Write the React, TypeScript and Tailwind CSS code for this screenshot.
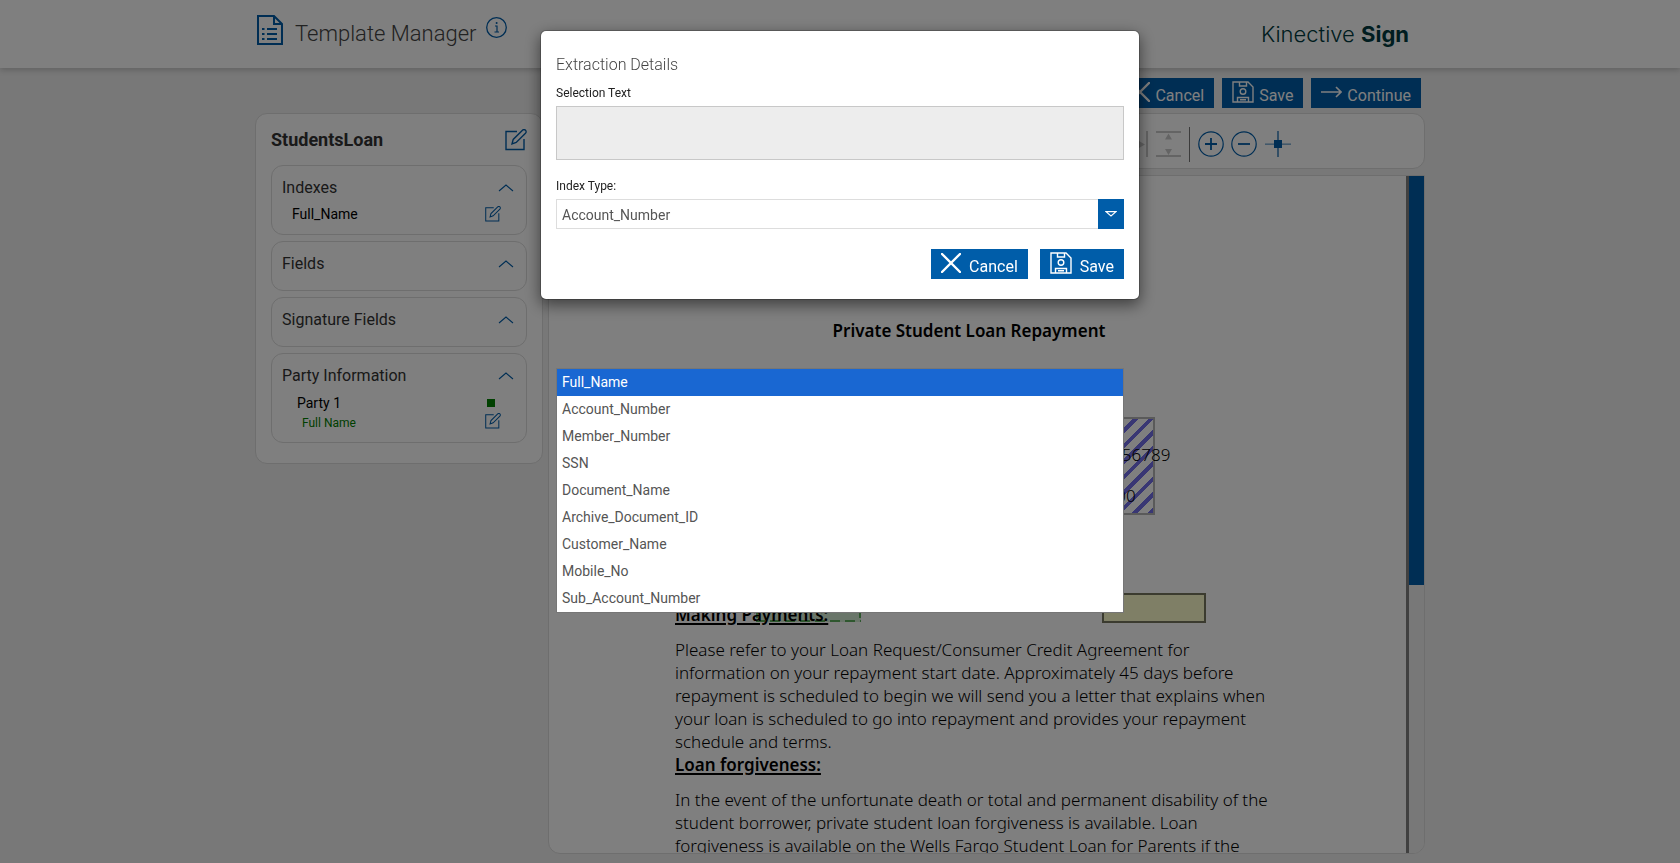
import { useState } from "react";
import type { ReactNode } from "react";

const INDEX_TYPES = [
  "Full_Name",
  "Account_Number",
  "Member_Number",
  "SSN",
  "Document_Name",
  "Archive_Document_ID",
  "Customer_Name",
  "Mobile_No",
  "Sub_Account_Number",
];

function CloseIcon() {
  return (
    <svg className="size-5" viewBox="0 0 20 20" fill="none" stroke="currentColor" strokeWidth="2.4" strokeLinecap="round">
      <path d="M1 1l18 18M19 1L1 19" />
    </svg>
  );
}

function SaveIcon() {
  return (
    <svg className="size-[22px]" viewBox="0 0 22 22" fill="none" stroke="currentColor" strokeWidth="1.4">
      <path d="M1 1h15l5 5v15H1z" />
      <path d="M7.5 1v4h7V1" />
      <circle cx="11" cy="10.5" r="2.8" />
      <path d="M5.5 21v-4.5h11V21M8 18.8h6" />
    </svg>
  );
}

function ArrowIcon() {
  return (
    <svg className="h-5 w-[21px]" viewBox="0 0 21 20" fill="none" stroke="currentColor" strokeWidth="1.6">
      <path d="M0 10h20M15 5l5 5-5 5" />
    </svg>
  );
}

function EditIcon({ className }: { className: string }) {
  return (
    <svg className={className} viewBox="0 0 22 22" fill="none" stroke="#005da9" strokeWidth="1.4">
      <path d="M12 2.5H1v18h18V10" />
      <path d="M7 15l1.2-4.6 9.3-9.2a1.9 1.9 0 0 1 3 3l-9.3 9.3z" />
    </svg>
  );
}

function ChevronUp() {
  return (
    <svg className="h-2 w-4" viewBox="0 0 16 8" fill="none" stroke="#005da9" strokeWidth="1.1">
      <path d="M1 7l7-6 7 6" />
    </svg>
  );
}

function ActionButton({ icon, label, wide = false }: { icon: ReactNode; label: string; wide?: boolean }) {
  return (
    <button
      type="button"
      className={`flex h-[30px] items-center bg-[#005da9] px-[10px] text-base text-white ${wide ? "gap-2" : "gap-[5px]"}`}
    >
      <span className="pb-0.5">{icon}</span>
      <span className="pt-[5px]">{label}</span>
    </button>
  );
}

function SideCard({ title, children }: { title: string; children?: ReactNode }) {
  return (
    <section className="rounded-xl border border-[#dcdcdc] pt-[11px] pr-3 pb-[5px] pl-[10px]">
      <button type="button" className="flex h-[22px] w-full items-center justify-between text-base text-[#333]">
        {title}
        <ChevronUp />
      </button>
      {children || <div className="h-[10px]" />}
    </section>
  );
}

function Header() {
  return (
    <header className="h-[68px] shrink-0 bg-white shadow-[0_2px_6px_rgba(0,0,0,0.2)]">
      <div className="mx-auto flex h-full w-full max-w-[1170px] items-start justify-between pr-4 pl-0.5">
        <div className="flex items-start pt-[15px]">
          <svg className="h-[30px] w-[26px]" viewBox="0 0 26 30" fill="none" stroke="#005da9" strokeWidth="2">
            <path d="M1 1h16l8 8v20H1z" />
            <path d="M17 1v8h8" />
            <path d="M10 14h10M10 19h10M10 24h10M5 14h2.500M5 19h2.500M5 24h2.500" />
          </svg>
          <h1 className="ml-3 pt-[3px] text-[22px] leading-8 font-light text-[#444]">Template Manager</h1>
          <button type="button" aria-label="Information" className="ml-[10px] pt-0.5">
            <svg className="size-[21px]" viewBox="0 0 21 21" fill="none" stroke="#005da9">
              <circle cx="10.5" cy="10.5" r="9.8" strokeWidth="1.3" />
              <path d="M9 9h2v6M8.5 15h4.5" strokeWidth="1.2" />
              <circle cx="10.6" cy="6" r="1" fill="#005da9" stroke="none" />
            </svg>
          </button>
        </div>
        <div className="pt-[18px] font-['Inter',sans-serif] text-[22px] leading-8 text-[#003b40]">
          <span className="font-light">Kinective</span> <span className="font-bold">Sign</span>
        </div>
      </div>
    </header>
  );
}

function Sidebar() {
  return (
    <aside className="w-[288px] shrink-0 self-start rounded-xl border border-[#dcdcdc] bg-white px-[15px] pt-[14px] pb-5">
      <div className="mb-[13px] flex items-center justify-between">
        <h2 className="text-lg leading-6 font-bold text-[#333]">StudentsLoan</h2>
        <button type="button" aria-label="Rename template">
          <EditIcon className="size-[22px]" />
        </button>
      </div>
      <div className="flex flex-col gap-1.5">
        <SideCard title="Indexes">
          <div className="flex h-[30px] items-center justify-between pr-[13px] pl-[10px] text-sm">
            Full_Name
            <button type="button" aria-label="Edit Full_Name">
              <EditIcon className="size-4" />
            </button>
          </div>
        </SideCard>
        <SideCard title="Fields" />
        <SideCard title="Signature Fields" />
        <SideCard title="Party Information">
          <div className="flex h-[26px] items-center justify-between pt-[5px] pr-[19px] pl-[15px] text-sm">
            Party 1
            <span className="size-2 bg-[#008000]" />
          </div>
          <div className="flex h-6 items-start justify-between pr-[13px] pl-5 text-xs leading-4 text-[#008000]">
            <span className="pt-0.5">Full Name</span>
            <button type="button" aria-label="Edit Full Name">
              <EditIcon className="size-4" />
            </button>
          </div>
        </SideCard>
      </div>
    </aside>
  );
}

function Toolbar() {
  return (
    <div className="flex h-14 shrink-0 items-center justify-end rounded-xl border border-[#dcdcdc] bg-white pt-1.5 pr-[133px]">
      <button type="button" aria-label="Fit width">
        <svg className="h-[26px] w-[25px]" viewBox="0 0 25 26" fill="#c9c9c9">
          <path d="M0 0h2v26H0zM23 0h2v26h-2zM3 13.500l6-3.500v7zM22 13.500l-6-3.500v7z" />
        </svg>
      </button>
      <button type="button" aria-label="Fit height" className="ml-2">
        <svg className="h-[26px] w-[25px]" viewBox="0 0 25 26" fill="#c9c9c9">
          <path d="M0 0h25v2H0zM0 24h25v2H0zM12.5 2.5l3.5 6H9zM12.5 24l3.5-6H9z" />
        </svg>
      </button>
      <span className="mx-2 h-[35px] w-px bg-[#777]" />
      <button type="button" aria-label="Zoom in">
        <svg className="size-[26px]" viewBox="0 0 26 26" fill="none" stroke="#005da9">
          <circle cx="13" cy="13" r="12.2" strokeWidth="1.2" />
          <path d="M7 13h12M13 7v12" strokeWidth="1.8" />
        </svg>
      </button>
      <button type="button" aria-label="Zoom out" className="ml-[7px]">
        <svg className="size-[26px]" viewBox="0 0 26 26" fill="none" stroke="#005da9">
          <circle cx="13" cy="13" r="12.2" strokeWidth="1.2" />
          <path d="M7 13h12" strokeWidth="1.8" />
        </svg>
      </button>
      <button type="button" aria-label="Center page" className="ml-2">
        <svg className="size-[26px]" viewBox="0 0 26 26" fill="#005da9">
          <path d="M0 12.5h26v1.3H0z" opacity="0.6" />
          <path d="M12.4 0h1.2v26h-1.2zM9 9h8v8H9z" />
        </svg>
      </button>
    </div>
  );
}

function DocumentView() {
  return (
    <div className="flex min-h-0 flex-1 overflow-hidden rounded-b-xl border border-[#dcdcdc] bg-white">
      <div className="relative min-w-0 flex-1 overflow-hidden">
        {/* Field markers dropped on the page */}
        <div className="absolute top-[241px] left-[473px] h-[98px] w-[133px] border-2 border-[#b4b4b4] bg-[repeating-linear-gradient(-45deg,#726ee8_0px,#726ee8_4px,transparent_4px,transparent_11px)]" />
        <svg className="absolute top-[418px] left-[207px] h-7 w-[105px]" viewBox="0 0 105 28">
          <path d="M0 0h105v28H0z" fill="#d5ecd5" />
          <path d="M0 27h105M0 1h105M1 0v28M104 0v28" fill="none" stroke="#5fae5f" strokeWidth="2" strokeDasharray="10 5" strokeDashoffset="1" />
        </svg>
        <div className="absolute top-[417px] left-[553px] h-[30px] w-[104px] border-2 border-[#77775f] bg-[#ffffcc]" />

        <article className="relative ml-[126px] w-[600px] pt-[141px] font-['Noto_Sans',sans-serif] text-[17px] leading-[23px] font-light whitespace-nowrap text-black">
          <h2 className="pr-3 text-center leading-7 font-semibold">Private Student Loan Repayment</h2>
          <div className="mt-[98px] ml-[408px]">
            <p>123456789</p>
            <p className="mt-[18px]">500.00</p>
          </div>
          <h3 className="mt-24 font-semibold underline decoration-2 underline-offset-2">Making Payments:</h3>
          <p className="mt-3">
            Please refer to your Loan Request/Consumer Credit Agreement for
            <br />
            information on your repayment start date. Approximately 45 days before
            <br />
            repayment is scheduled to begin we will send you a letter that explains when
            <br />
            your loan is scheduled to go into repayment and provides your repayment
            <br />
            schedule and terms.
          </p>
          <h3 className="font-semibold underline decoration-2 underline-offset-2">Loan forgiveness:</h3>
          <p className="mt-3">
            In the event of the unfortunate death or total and permanent disability of the
            <br />
            student borrower, private student loan forgiveness is available. Loan
            <br />
            forgiveness is available on the Wells Fargo Student Loan for Parents if the
          </p>
        </article>
      </div>
      <div className="w-[18px] shrink-0 border-l-[3px] border-[#808080] bg-[#f0f0f0]">
        <div className="h-[409px] bg-[#005da9]" />
      </div>
    </div>
  );
}

function ExtractionDialog() {
  const [indexType, setIndexType] = useState("Account_Number");

  return (
    <div className="fixed inset-0 flex items-start justify-center bg-black/50 pt-[30px]">
      <form
        role="dialog"
        aria-labelledby="extraction-title"
        className="relative w-[600px] rounded-md border border-black/20 bg-white bg-clip-padding px-[15px] pt-[22px] pb-5 shadow-[0_5px_15px_rgba(0,0,0,0.5)]"
      >
        <h2 id="extraction-title" className="text-base leading-6 font-light text-[#444]">
          Extraction Details
        </h2>
        <label htmlFor="selection-text" className="mt-2 block text-xs leading-4 text-[#222]">
          Selection Text
        </label>
        <textarea
          id="selection-text"
          readOnly
          className="mt-[5px] block h-[54px] w-full resize-none border border-[#c8c8c8] bg-[#ededed] p-1 text-sm"
        />
        <label htmlFor="index-type" className="mt-[18px] block text-xs leading-4 text-[#222]">
          Index Type:
        </label>
        <div className="mt-[5px] flex h-[30px]">
          <select
            id="index-type"
            value={indexType}
            onChange={(e) => setIndexType(e.target.value)}
            className="min-w-0 flex-1 appearance-none border border-r-0 border-[#ddd] bg-white px-[5px] pt-0.5 text-sm text-[#555]"
          >
            {INDEX_TYPES.map((type) => (
              <option key={type}>{type}</option>
            ))}
          </select>
          <span className="flex w-[26px] items-center justify-center bg-[#005da9]">
            <svg className="h-1.5 w-3" viewBox="0 0 12 6" fill="none" stroke="#fff" strokeWidth="1.1">
              <path d="M1 .6h10L6 5z" />
            </svg>
          </span>
        </div>
        <div className="mt-5 flex justify-end gap-3">
          <ActionButton icon={<CloseIcon />} label="Cancel" wide />
          <ActionButton icon={<SaveIcon />} label="Save" wide />
        </div>

        {/* Open option list */}
        <ul role="listbox" aria-label="Index Type" className="absolute top-[337px] right-[15px] left-[15px] border border-[#767676] bg-white text-sm leading-[27px] text-[#555]">
          {INDEX_TYPES.map((type) => (
            <li
              key={type}
              role="option"
              aria-selected={type === "Full_Name"}
              className="px-[5px] aria-selected:bg-[#1967d2] aria-selected:text-white"
            >
              {type}
            </li>
          ))}
        </ul>
      </form>
    </div>
  );
}

export default function App() {
  return (
    <div className="flex h-screen flex-col overflow-hidden bg-[#f0f0f0] font-['Roboto',sans-serif] text-black">
      <Header />
      <div className="mx-auto flex min-h-0 w-full max-w-[1170px] flex-1 flex-col pt-[10px] pb-[9px]">
        <div className="flex justify-end gap-2 pr-1">
          <ActionButton icon={<CloseIcon />} label="Cancel" />
          <ActionButton icon={<SaveIcon />} label="Save" />
          <ActionButton icon={<ArrowIcon />} label="Continue" />
        </div>
        <div className="mt-[5px] flex min-h-0 flex-1 gap-[5px]">
          <Sidebar />
          <main className="flex min-w-0 flex-1 flex-col gap-[6px]">
            <Toolbar />
            <DocumentView />
          </main>
        </div>
      </div>
      <ExtractionDialog />
    </div>
  );
}
